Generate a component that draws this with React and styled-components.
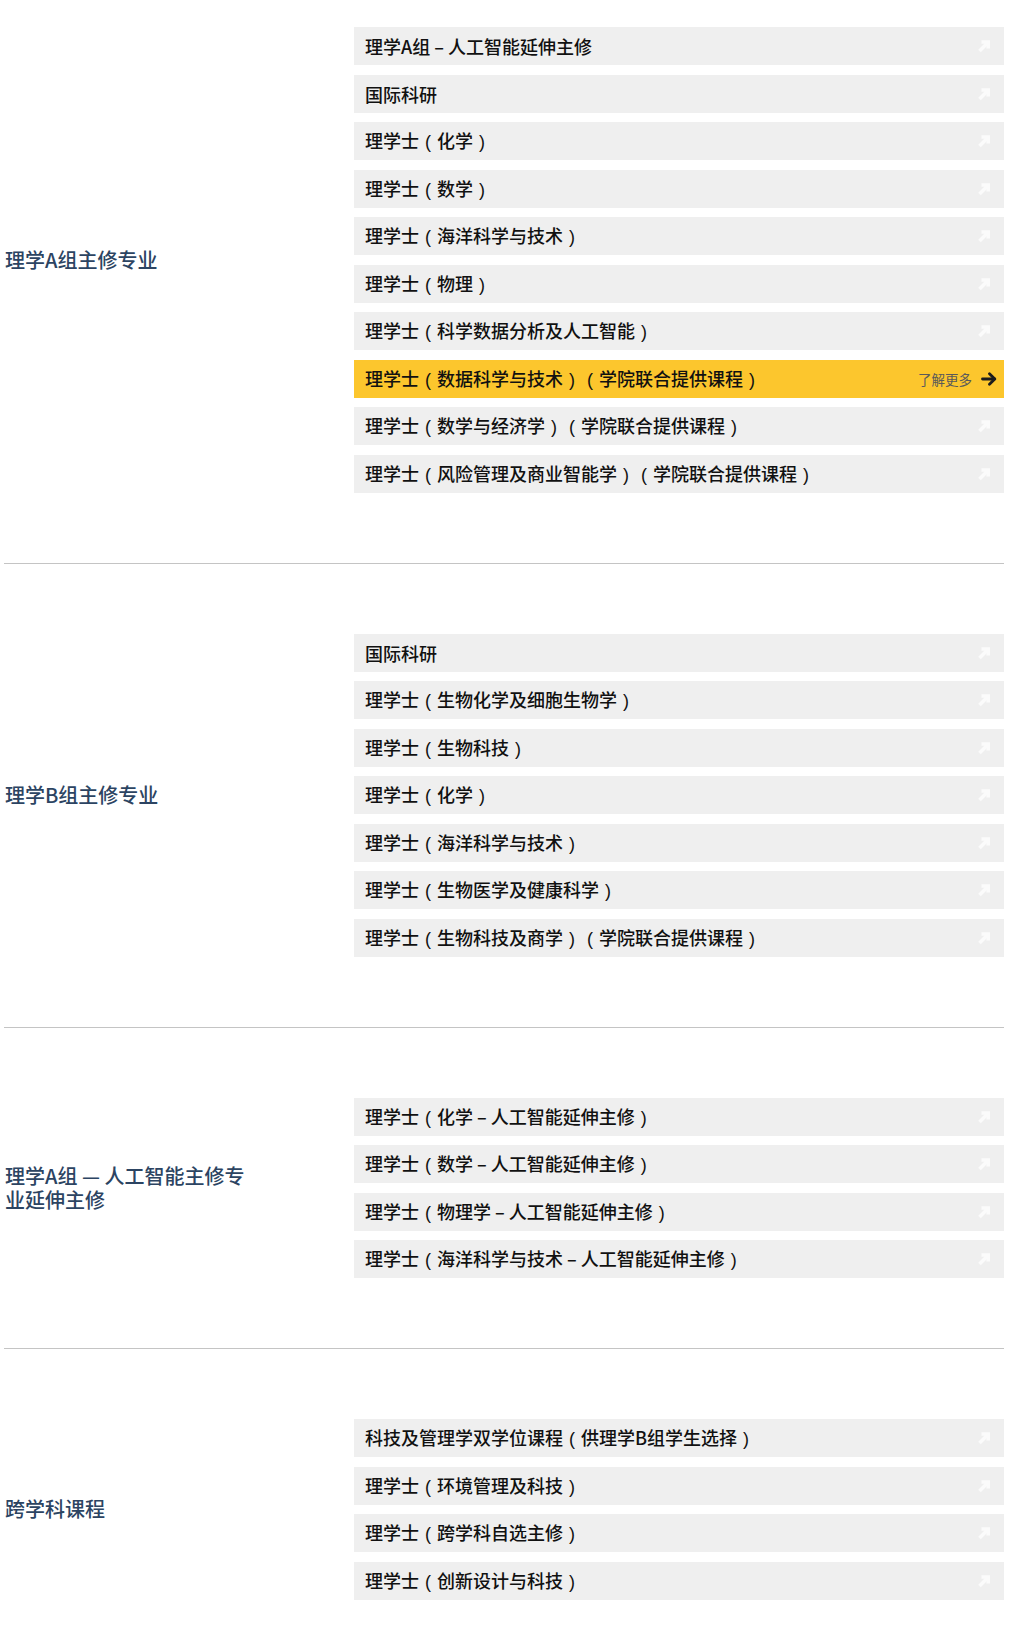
import React from 'react'
import styled, { createGlobalStyle } from 'styled-components'

const GlobalStyle = createGlobalStyle`
  body {
    margin: 0;
    background: #ffffff;
    font-family: 'Noto Sans CJK SC', 'Noto Sans', sans-serif;
    text-spacing-trim: space-all;
  }
`

const Page = styled.div`
  width: 1000px;
  padding: 0 8px 0 4px;
`

const Section = styled.section`
  display: grid;
  grid-template-columns: 350px 650px;
  align-items: center;
  padding: ${({ first }) => (first ? '27px' : '70px')} 0 70px;
  border-bottom: 1px solid #c4c4c4;
`

const Heading = styled.h2`
  margin: 0;
  padding-left: 1px;
  max-width: 255px;
  font-size: 20px;
  line-height: 24px;
  font-weight: 500;
  color: #2c4462;
`

const List = styled.div`
  display: flex;
  flex-direction: column;
  gap: 9.5px;
`

const Row = styled.a`
  display: flex;
  align-items: center;
  justify-content: space-between;
  height: 38px;
  padding: 0 7px 0 11px;
  background: ${({ active }) => (active ? '#fcc62d' : '#efefef')};
  color: #111111;
  font-size: 18px;
  font-weight: 500;
  text-decoration: none;
  cursor: pointer;
  white-space: nowrap;
`

const Label = styled.span`
  line-height: 1;
`

// the source draws its brackets as thin glyphs centred in a full-width slot
const Paren = styled.span`
  display: inline-block;
  width: 1em;
  text-align: center;
  font-family: 'Liberation Sans', sans-serif;
  font-weight: 400;
`

const More = styled.span`
  display: flex;
  align-items: center;
  gap: 9px;
  font-size: 13.5px;
  font-weight: 400;
  color: #5a5a5a;
`

function withParens(text) {
  return text.split(/([（）])/).map((part, i) => {
    if (part === '（') return <Paren key={i}>(</Paren>
    if (part === '）') return <Paren key={i}>)</Paren>
    return part
  })
}

function FaintArrow() {
  return (
    <svg width="14" height="14" viewBox="0 0 14 14" style={{ marginRight: 6 }}>
      <g stroke="#fbfbfb" strokeWidth="3.6" fill="none" strokeLinecap="butt">
        <path d="M2.5 12 L11 3.5" />
        <path d="M4.5 3 H11.2 V9.5" />
      </g>
    </svg>
  )
}

function BoldArrow() {
  return (
    <svg width="16" height="14" viewBox="0 0 16 14">
      <g stroke="#1c1c1c" strokeWidth="2.8" fill="none" strokeLinecap="round" strokeLinejoin="round">
        <path d="M1.5 7 H13.5" />
        <path d="M8.5 1.8 L13.8 7 L8.5 12.2" />
      </g>
    </svg>
  )
}

const sections = [
  {
    title: '理学A组主修专业',
    items: [
      '理学A组 – 人工智能延伸主修',
      '国际科研',
      '理学士（化学）',
      '理学士（数学）',
      '理学士（海洋科学与技术）',
      '理学士（物理）',
      '理学士（科学数据分析及人工智能）',
      '理学士（数据科学与技术）（学院联合提供课程）',
      '理学士（数学与经济学）（学院联合提供课程）',
      '理学士（风险管理及商业智能学）（学院联合提供课程）',
    ],
    active: 7,
  },
  {
    title: '理学B组主修专业',
    items: [
      '国际科研',
      '理学士（生物化学及细胞生物学）',
      '理学士（生物科技）',
      '理学士（化学）',
      '理学士（海洋科学与技术）',
      '理学士（生物医学及健康科学）',
      '理学士（生物科技及商学）（学院联合提供课程）',
    ],
  },
  {
    title: '理学A组 — 人工智能主修专业延伸主修',
    items: [
      '理学士（化学 – 人工智能延伸主修）',
      '理学士（数学 – 人工智能延伸主修）',
      '理学士（物理学 – 人工智能延伸主修）',
      '理学士（海洋科学与技术 – 人工智能延伸主修）',
    ],
  },
  {
    title: '跨学科课程',
    items: [
      '科技及管理学双学位课程（供理学B组学生选择）',
      '理学士（环境管理及科技）',
      '理学士（跨学科自选主修）',
      '理学士（创新设计与科技）',
    ],
  },
]

export default function App() {
  return (
    <Page>
      <GlobalStyle />
      {sections.map((s, i) => (
        <Section key={s.title} first={i === 0}>
          <Heading>{s.title}</Heading>
          <List>
            {s.items.map((item, j) => {
              const active = s.active === j
              return (
                <Row key={item + j} active={active}>
                  <Label>{withParens(item)}</Label>
                  {active ? (
                    <More>
                      了解更多
                      <BoldArrow />
                    </More>
                  ) : (
                    <FaintArrow />
                  )}
                </Row>
              )
            })}
          </List>
        </Section>
      ))}
    </Page>
  )
}
